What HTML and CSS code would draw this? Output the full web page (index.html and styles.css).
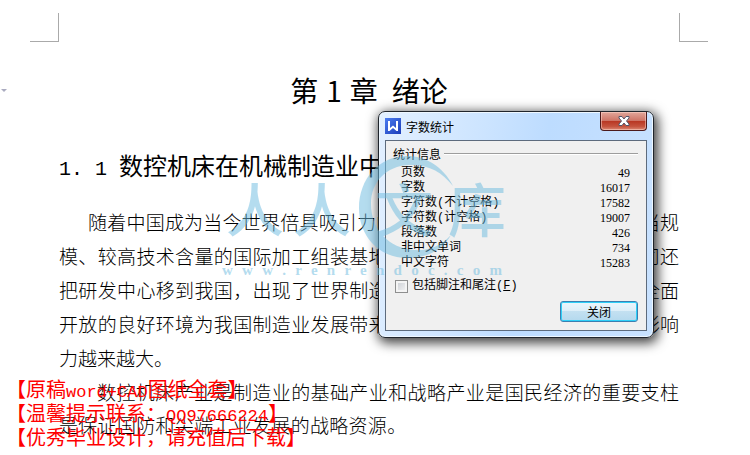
FILE: index.html
```html
<!DOCTYPE html>
<html lang="zh-CN">
<head>
<meta charset="utf-8">
<title>字数统计</title>
<link rel="stylesheet" href="styles.css">
</head>
<body>
<main class="page">
  <div class="crops"><span class="crop crop-left"></span><span class="crop crop-right"></span></div>
  <span class="fold-mark"></span>
  <article class="doc">
    <h1><span class="chapter"><span>第</span> <span>1</span> <span>章</span></span> <span>绪论</span></h1>
    <h2><span class="num">1. 1 </span>数控机床在机械制造业中</h2>
    <div class="para">
      <div class="line first"><span class="run">随着中国成为当今世界倍具吸引力的</span><span>当规</span></div>
      <div class="line"><span class="run">模、较高技术含量的国际加工组装基地</span><span>司还</span></div>
      <div class="line"><span class="run">把研发中心移到我国，出现了世界制造</span><span>全面</span></div>
      <div class="line"><span class="run">开放的良好环境为我国制造业发展带来</span><span>影响</span></div>
      <div class="line">力越来越大。</div>
    </div>
    <div class="para tight">
      <div class="line second"><span class="full">数控机床产业是制造业的基础产业和战略产业是国民经济的重要支柱</span></div>
      <div class="line"><span class="closing">是保证国防和尖端工业发展的战略资源。</span></div>
    </div>
  </article>

  <aside class="notice">
    <p>【原稿<span>word+CAD</span>图纸全套】</p>
    <p>【温馨提示联系：<span>QQ97666224</span>】</p>
    <p>【优秀毕业设计，请充值后下载】</p>
  </aside>

  <section class="dialog" role="dialog" aria-labelledby="dialog-title">
    <header class="titlebar">
      <svg class="logo" viewBox="0 0 16 16" aria-hidden="true">
        <defs><linearGradient id="lg" x1="0" y1="0" x2="1" y2="1"><stop offset="0" stop-color="#4b7df0"/><stop offset="1" stop-color="#1b3cb8"/></linearGradient></defs>
        <rect width="16" height="16" fill="url(#lg)"/>
        <path d="M3 3H5V10L8 7.500L11 10V3H13V13H11.500L8 10L4.500 13H3Z" fill="#fff"/>
      </svg>
      <span class="title" id="dialog-title">字数统计</span>
      <button class="close" type="button" aria-label="关闭窗口">
        <svg viewBox="0 0 14 12" aria-hidden="true"><path d="M2 1.500H5L7 4L9 1.500H12V3L9.500 6L12 9V10.500H9L7 8L5 10.500H2V9L4.500 6L2 3Z" fill="#fff" stroke="#53566b"/></svg>
      </button>
    </header>
    <div class="content">
      <div class="legend"><span>统计信息</span><i></i></div>
      <table>
        <tr><th scope="row">页数</th><td>49</td></tr>
        <tr><th scope="row">字数</th><td>16017</td></tr>
        <tr><th scope="row">字符数(不计空格)</th><td>17582</td></tr>
        <tr><th scope="row">字符数(计空格)</th><td>19007</td></tr>
        <tr><th scope="row">段落数</th><td>426</td></tr>
        <tr><th scope="row">非中文单词</th><td>734</td></tr>
        <tr><th scope="row">中文字符</th><td>15283</td></tr>
      </table>
      <label class="option"><input type="checkbox"><span>包括脚注和尾注(<u>F</u>)</span></label>
      <div class="actions"><button class="ok" type="button">关闭</button></div>
    </div>
  </section>

  <div class="watermark">
    <svg class="ring" viewBox="0 0 100 104" aria-hidden="true">
      <path d="M95 31C85 11 67 1 49 1C21 1 1 24 1 53C1 82 22 103 49 103C68 103 84 96 93 80C82 92 69 96 56 95C31 93 13 75 13 49C13 27 28 11 51 10C70 9 84 17 95 31Z"/>
    </svg>
    <div class="brand"><span>人</span><span>人</span><span>文</span><span>库</span></div>
    <div class="site">w w w . r e n r e n d o c . c o m</div>
  </div>
</main>
</body>
</html>
```

FILE: styles.css
```css
* { box-sizing: border-box; }
body {
  margin: 0;
  background: #fff;
  color: #000;
  font-family: "Noto Sans CJK SC", sans-serif;
}
.page { position: relative; min-height: 100vh; padding-top: 13px; overflow: hidden; }
.crops { display: flex; justify-content: space-between; padding: 0 42px 0 30px; }
.crop { width: 29px; height: 29px; border-bottom: 1px solid #aaa; }
.crop-left { border-right: 1px solid #aaa; }
.crop-right { border-left: 1px solid #aaa; }
.fold-mark {
  position: absolute; left: 1px; top: 89px;
  border: 3px solid transparent; border-top-color: #aaabc0; border-bottom: 0;
}
.doc { padding: 28px 71px 0 59px; }
h1, h2, p { margin: 0; font-weight: 400; }
h1 { display: flex; justify-content: center; gap: 14px; font-size: 28px; line-height: 40px; }
.chapter { display: flex; gap: 8px; }
h2 { padding-top: 36px; font-size: 24px; line-height: 38px; white-space: pre; }
h2 .num { font-family: "Liberation Mono", monospace; font-size: 20px; line-height: 1; }
.para { font-size: 19px; line-height: 34px; font-weight: 300; }
.para:first-of-type { margin-top: 21px; }
.tight { line-height: 33px; }
.line { display: flex; justify-content: space-between; white-space: nowrap; }
.first { padding-left: 29px; }
.second { padding-left: 38px; }
.run, .full, .closing { text-align: justify; text-align-last: justify; white-space: normal; }
.run { width: 53%; }
.first .run { width: 52%; }
.full { width: 100%; }
.closing { width: 56%; }

.notice {
  position: absolute; left: 6px; top: 377px;
  color: #f00; font-size: 20px; line-height: 24px; font-weight: 300; white-space: nowrap;
}
.notice p { height: 24px; }
.notice span { font-family: "Liberation Mono", monospace; font-size: 17px; line-height: 1; }

.dialog {
  position: absolute; left: 378px; top: 111px; width: 276px;
  padding: 0 6px 6px;
  border: 1px solid #20252c; border-radius: 7px;
  background: linear-gradient(100deg, #e3f0ff 0, #cce4ff 35%, #bddcff 55%, #c9e2ff 100%);
  box-shadow: inset 0 0 0 1px #eef7ff, 2px 3px 12px 2px rgba(0, 0, 0, .75);
  font-size: 12px;
}
.titlebar { display: flex; align-items: center; height: 28px; }
.logo { width: 16px; height: 16px; }
.title { margin-left: 5px; }
.close {
  display: flex; align-items: center; justify-content: center; align-self: flex-start;
  width: 47px; height: 19px; margin-left: auto; padding: 0;
  border: 1px solid #4b1a1c; border-top: 0; border-radius: 0 0 4px 4px;
  background: linear-gradient(#e2a79b, #cd7466 48%, #b83522 50%, #c5533e 80%, #dc8975);
  box-shadow: inset 0 0 0 1px rgba(255, 220, 210, .5);
}
.close svg { width: 14px; height: 12px; }
.content { padding: 5px 8px 8px 7px; border: 1px solid #5d6b7d; background: #f0f0f0; }
.legend { display: flex; align-items: center; gap: 3px; line-height: 16px; }
.legend i { flex: 1; height: 2px; border-top: 1px solid #9d9d9d; background: #fff; }
table { width: 100%; margin-top: 4px; border-collapse: collapse; }
th, td { padding: 0; font-weight: 400; line-height: 15px; height: 15px; }
th { padding-left: 8px; text-align: left; font-family: "Liberation Mono", "Noto Sans CJK SC", sans-serif; }
td { padding-right: 8px; text-align: right; font-family: "Liberation Serif", serif; }
.option { display: flex; align-items: center; gap: 4px; margin-top: 5px; padding-left: 2px; line-height: 20px; }
.option span { font-family: "Liberation Mono", "Noto Sans CJK SC", sans-serif; }
.option input {
  appearance: none; width: 13px; height: 13px; margin: 0;
  border: 1px solid #8e8f8f; background: linear-gradient(135deg, #c8ccd2, #f6f6f6);
  box-shadow: inset 0 0 0 2px #f4f4f4;
}
.actions { display: flex; justify-content: flex-end; margin-top: 5px; }
.ok {
  width: 78px; height: 21px; padding: 0;
  border: 1px solid #3c7fb1; border-radius: 3px;
  background: linear-gradient(#ecf6fc, #dceef8 48%, #c3e0f1 50%, #b4d9ee);
  box-shadow: inset 0 0 0 1px #2fd0f8;
  font: 12px/17px "Noto Sans CJK SC", sans-serif; color: #000;
}

.watermark {
  position: absolute; left: 222px; top: 155px; width: 280px;
  color: #6cbbe0; opacity: .5; pointer-events: none;
}
.ring { position: absolute; left: 136px; top: 0; width: 100px; fill: #6cbbe0; }
.brand {
  display: grid; grid-template-columns: 66px 68px 96px 50px;
  padding-top: 16px; font-size: 58px; line-height: 72px; font-weight: 500;
}
.brand span { display: flex; justify-content: center; }
.site {
  padding-top: 18px; font: bold 15px/18px "Liberation Serif", serif;
  text-align: justify; text-align-last: justify;
}
```
